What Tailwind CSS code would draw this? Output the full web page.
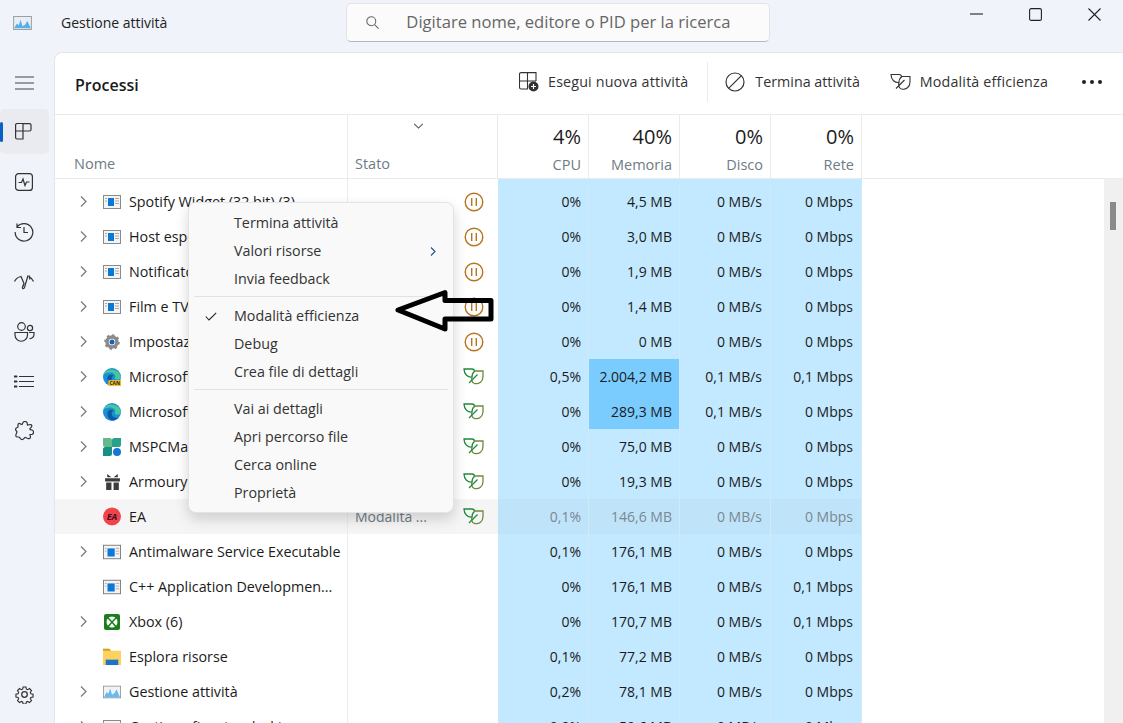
<!DOCTYPE html>
<html lang="it">
<head>
  <meta charset="UTF-8" />
  <title>Gestione attività</title>
  <script src="https://cdn.jsdelivr.net/npm/@tailwindcss/browser@4"></script>
</head>
<body class="relative h-[723px] w-[1123px] overflow-hidden bg-[#f0f3f9] text-[14px] text-[#1b1b1b] font-['Open_Sans',sans-serif]">

  <!-- Title bar -->
  <header class="flex h-[52px] items-center pb-[7px]">
    <svg class="ml-[13px] h-[14px] w-[19px]" viewBox="0 0 20 15"><rect x=".5" y=".5" width="19" height="14" fill="#e8eef5" stroke="#9a9a9a"/><path d="M1 13 L4 8 L6 10 L8 4 L10 11 L13 9 L15 5 L19 13 Z" fill="#5aaeea"/></svg>
    <span class="ml-[29px] text-[#222]">Gestione attività</span>
    <div class="ml-[179px] flex h-[39px] w-[424px] items-center rounded-[5px] border border-[#e3e4e6] border-b-[#b5b5b5] bg-[#fbfbfb]">
      <svg class="ml-[19px] h-[13px] w-[13px]" viewBox="0 0 16 16" fill="none" stroke="#666" stroke-width="1.300"><circle cx="6.500" cy="6.500" r="5.500"/><path d="M10.500 10.500 L15.500 15.500"/></svg>
      <span class="ml-[27px] text-[16.600px] text-[#666]">Digitare nome, editore o PID per la ricerca</span>
    </div>
    <div class="ml-auto mt-[-17px] flex items-center">
      <svg class="h-[12px] w-[13px]" viewBox="0 0 13 12" stroke="#222" stroke-width="1.100"><path d="M0 6 H13"/></svg>
      <svg class="ml-[46px] h-[13px] w-[13px]" viewBox="0 0 13 13" fill="none" stroke="#222" stroke-width="1.100"><rect x=".6" y=".6" width="11.800" height="11.800" rx="1.500"/></svg>
      <svg class="ml-[46px] mr-[22px] h-[13px] w-[13px]" viewBox="0 0 13 13" fill="none" stroke="#222" stroke-width="1.100"><path d="M.5 .5 L12.500 12.500 M12.500 .5 L.5 12.500"/></svg>
    </div>
  </header>

  <div class="flex h-[671px]">
    <!-- Left navigation -->
    <nav class="relative flex w-[54px] shrink-0 flex-col">
      <div class="flex h-[54px] items-center pl-[15px] pt-[8px]">
        <svg class="h-[16px] w-[19px]" viewBox="0 0 19 16" stroke="#444" stroke-width="1.200"><path d="M0 2 H19 M0 8 H19 M0 14 H19"/></svg>
      </div>
      <div class="flex h-[50px] items-center">
        <div class="relative flex h-[45px] w-[49px] items-center rounded-[5px] bg-[#e9ebf0]">
          <span class="absolute left-0 top-[13px] h-[20px] w-[3px] rounded-full bg-[#0a5fc2]"></span>
          <svg class="ml-[15px] h-[17px] w-[17px]" viewBox="0 0 17 17" fill="none" stroke="#333" stroke-width="1.200"><path d="M.6 2 a1.500 1.500 0 0 1 1.500 -1.500 H8 V8 H.6 Z M8 .6 H14.500 a1.500 1.500 0 0 1 1.500 1.500 V6.500 a1.500 1.500 0 0 1 -1.500 1.500 H8 M.6 8 V14.500 a1.500 1.500 0 0 0 1.500 1.500 H8 V8"/></svg>
        </div>
      </div>
      <div class="flex h-[50px] items-center pl-[15px] pt-[2px]">
        <svg class="h-[18px] w-[18px]" viewBox="0 0 18 18" fill="none" stroke="#333" stroke-width="1.200"><rect x=".6" y=".6" width="16.800" height="16.800" rx="3"/><path d="M3.500 9.500 H6.500 L8 6 L10 12.500 L11.500 9 H14.500"/></svg>
      </div>
      <div class="flex h-[50px] items-center pl-[14px] pt-[2px]">
        <svg class="h-[20px] w-[20px]" viewBox="0 0 20 20" fill="none" stroke="#333" stroke-width="1.200"><path d="M3 5 A8.800 8.800 0 1 1 1.200 10 M3 1.500 V5.500 H7 M10 5 V10.500 H14"/></svg>
      </div>
      <div class="flex h-[50px] items-center pl-[14px] pt-[2px]">
        <svg class="h-[16px] w-[20px]" viewBox="0 0 20 15" fill="none" stroke="#333" stroke-width="1.200"><path d="M.5 7 C2 4 4.500 2.500 7 2 L10 9 L9 12 M14 1 L10.500 13 C10 14.500 8 14.500 8.500 12.500 L10 9 M15 2 C17 3 18.500 5 19.500 7 M15 1 L16 5"/></svg>
      </div>
      <div class="flex h-[50px] items-center pl-[14px] pt-[2px]">
        <svg class="h-[20px] w-[21px]" viewBox="0 0 21 20" fill="none" stroke="#333" stroke-width="1.200"><circle cx="7.500" cy="4.500" r="3.800"/><circle cx="16" cy="6" r="2.600"/><path d="M1 10.500 H13.500 V13 A6 6 0 0 1 1 13 Z M15 10.500 H20 V12.500 A4 4 0 0 1 15.500 16.500"/></svg>
      </div>
      <div class="flex h-[49px] items-center pl-[14px] pt-[2px]">
        <svg class="h-[13px] w-[20px]" viewBox="0 0 20 13" fill="none" stroke="#333" stroke-width="1.200"><path d="M5 1.500 H20 M5 6.500 H20 M5 11.500 H20"/><path d="M.5 1.500 H2.500 M.5 6.500 H2.500 M.5 11.500 H2.500" stroke-width="2" stroke-linecap="round"/></svg>
      </div>
      <div class="flex h-[50px] items-center pl-[15px] pt-[2px]">
        <svg class="h-[20px] w-[19px]" viewBox="0 0 19 20" fill="none" stroke="#333" stroke-width="1.200"><path d="M8 1.500 C9 0 11 0 12 1.500 L12.500 4 L15.500 3.500 C17 3.500 17 5 16.500 6 L15 7.500 C14.500 8.500 16 9 17 9 C19 9.500 19 13 17 13.500 L15 13.500 L15.500 16 C15.500 17.500 14 18 13 17.500 L10.500 16.500 C9.500 16 8.500 19 7 18.500 C5.500 18.500 5 16.500 4 16 L2 16 C1 16 .5 14.500 1 13.500 L2 11 C2 10 .5 9.500 .5 8.500 C.5 7 2 6.500 3 6 L3 3.500 C3 2.500 4.500 2 5.500 3 L7 3.500 Z"/></svg>
      </div>
      <svg class="absolute bottom-[19px] left-[15px] h-[19px] w-[19px]" viewBox="0 0 24 24" fill="none" stroke="#333" stroke-width="1.600"><circle cx="12" cy="12" r="3.500"/><path d="M10 1.500 h4 l.6 3 1.800 .8 2.600 -1.600 2.800 2.800 -1.600 2.600 .8 1.800 3 .6 v4 l-3 .6 -.8 1.800 1.600 2.600 -2.800 2.800 -2.600 -1.600 -1.800 .8 -.6 3 h-4 l-.6 -3 -1.800 -.8 -2.600 1.600 -2.800 -2.800 1.600 -2.600 -.8 -1.800 -3 -.6 v-4 l3 -.6 .8 -1.800 -1.600 -2.600 2.800 -2.800 2.600 1.600 1.800 -.8 z" transform="translate(1.200 1.200) scale(.9)"/></svg>
    </nav>

    <!-- Main panel -->
    <main class="relative min-w-0 flex-1 overflow-hidden rounded-tl-[8px] border-l border-t border-[#e5e5e5] bg-white">
      <!-- Command bar -->
      <div class="flex h-[62px] items-center border-b border-[#ebebeb] pb-[4px]">
        <h1 class="ml-[20px] mt-[6px] text-[16px] font-semibold text-[#1a1a1a]">Processi</h1>
        <svg class="ml-auto h-[20px] w-[20px]" viewBox="0 0 20 20" fill="none" stroke="#333" stroke-width="1.100"><path d="M9 17 H2 a1.500 1.500 0 0 1 -1.500 -1.500 V2 A1.500 1.500 0 0 1 2 .6 H17 V9 M.6 9 H17 M8.500 .6 V17"/><circle cx="14.500" cy="14.500" r="5" fill="#333" stroke="none"/><path d="M14.500 12 V17 M12 14.500 H17" stroke="#fff"/></svg>
        <span class="ml-[9px] text-[14.300px] tracking-[0.15px] text-[#333]">Esegui nuova attività</span>
        <span class="ml-[19px] h-[40px] w-px bg-[#ebebeb]"></span>
        <svg class="ml-[17px] h-[20px] w-[20px]" viewBox="0 0 20 20" fill="none" stroke="#333" stroke-width="1.200"><circle cx="10" cy="10" r="9"/><path d="M3.600 16.400 L16.400 3.600"/></svg>
        <span class="ml-[10px] text-[14.300px] text-[#333]">Termina attività</span>
        <svg class="ml-[30px] h-[18px] w-[21px]" viewBox="0 0 21 18" fill="none" stroke="#333" stroke-width="1.100"><path d="M1 1.500 H9 C11 1.500 11.500 3 11.500 4 C10 5 9 7 9 9.500 C5 10 1 7 1 1.500 Z M11 3.500 H20 V9 C20 14 16 17 11.500 16 C8 15 8.500 11 9 9.500 M6 15.500 L14.500 7"/></svg>
        <span class="ml-[9px] text-[14.300px] tracking-[0.15px] text-[#333]">Modalità efficienza</span>
        <span class="ml-[34px] mr-[21px] flex gap-[4px]">
          <i class="h-[4px] w-[4px] rounded-full bg-[#222]"></i><i class="h-[4px] w-[4px] rounded-full bg-[#222]"></i><i class="h-[4px] w-[4px] rounded-full bg-[#222]"></i>
        </span>
      </div>

      <!-- Column heads -->
      <div class="grid h-[64px] grid-cols-[293px_150px_91px_91px_91px_91px_1fr] border-b border-[#ebebeb]">
        <div class="flex items-end border-r border-[#ebebeb] pb-[3px] pl-[19px] text-[14.500px] text-[#6f7b85]">Nome</div>
        <div class="relative flex items-end border-r border-[#ebebeb] pb-[3px] pl-[7px] text-[14.500px] text-[#6f7b85]">Stato
          <svg class="absolute left-[65px] top-[8px] h-[6px] w-[11px]" viewBox="0 0 12 7" fill="none" stroke="#555" stroke-width="1.200"><path d="M1 1 L6 6 L11 1"/></svg>
        </div>
        <div class="flex flex-col items-end border-r border-[#ebebeb] pr-[7px] pt-[8px]"><span class="text-[20px] leading-[28px]">4%</span><span class="mt-[3px] text-[14.500px] text-[#6f7b85]">CPU</span></div>
        <div class="flex flex-col items-end border-r border-[#ebebeb] pr-[7px] pt-[8px]"><span class="text-[20px] leading-[28px]">40%</span><span class="mt-[3px] text-[14.500px] text-[#6f7b85]">Memoria</span></div>
        <div class="flex flex-col items-end border-r border-[#ebebeb] pr-[7px] pt-[8px]"><span class="text-[20px] leading-[28px]">0%</span><span class="mt-[3px] text-[14.500px] text-[#6f7b85]">Disco</span></div>
        <div class="flex flex-col items-end border-r border-[#ebebeb] pr-[7px] pt-[8px]"><span class="text-[20px] leading-[28px]">0%</span><span class="mt-[3px] text-[14.500px] text-[#6f7b85]">Rete</span></div>
        <div></div>
      </div>

      <!-- Process rows -->
      <div class="relative h-[545px] overflow-hidden">
        <div class="absolute left-[443px] top-0 h-full w-[364px] bg-[#c2e9ff]"></div>
        <div id="rows" class="relative pt-[5px]"></div>
        <div class="pointer-events-none absolute left-[292px] top-0 h-full w-px bg-[#ebebeb]"></div>
        <div class="absolute right-0 top-0 h-full w-[19px] bg-[#f0f0f0]">
          <div class="ml-[6px] mt-[23px] h-[28px] w-[6px] bg-[#8a8a8a]"></div>
        </div>
      </div>
    </main>
  </div>

  <!-- Context menu -->
  <div class="absolute left-[188px] top-[202px] w-[266px] rounded-[8px] border border-[#e4e4e4] bg-[#f9f9f9] px-[4px] pb-[5px] pt-[6px] text-[14.300px] text-[#333] shadow-[0_6px_14px_rgba(0,0,0,0.16)]">
    <div class="flex h-[28px] items-center pl-[41px]">Termina attività</div>
    <div class="flex h-[28px] items-center justify-between pl-[41px] pr-[13px]">Valori risorse
      <svg class="h-[9px] w-[6px]" viewBox="0 0 6 9" fill="none" stroke="#1f4f8f" stroke-width="1.100"><path d="M1 .5 L5 4.500 L1 8.500"/></svg>
    </div>
    <div class="flex h-[28px] items-center pl-[41px]">Invia feedback</div>
    <div class="mx-[1px] mb-[5px] mt-[3px] h-px bg-[#e2e2e2]"></div>
    <div class="flex h-[28px] items-center pl-[12px]">
      <svg class="mr-[17px] h-[9px] w-[12px]" viewBox="0 0 12 9" fill="none" stroke="#222" stroke-width="1.100"><path d="M.8 4.500 L4 8 L11.200 .8"/></svg>Modalità efficienza
    </div>
    <div class="flex h-[28px] items-center pl-[41px]">Debug</div>
    <div class="flex h-[28px] items-center pl-[41px]">Crea file di dettagli</div>
    <div class="mx-[1px] mb-[5px] mt-[3px] h-px bg-[#e2e2e2]"></div>
    <div class="flex h-[28px] items-center pl-[41px]">Vai ai dettagli</div>
    <div class="flex h-[28px] items-center pl-[41px]">Apri percorso file</div>
    <div class="flex h-[28px] items-center pl-[41px]">Cerca online</div>
    <div class="flex h-[28px] items-center pl-[41px]">Proprietà</div>
  </div>

  <!-- Arrow drawn over the screenshot -->
  <svg class="pointer-events-none absolute left-[390px] top-[285px] h-[50px] w-[110px]" viewBox="0 0 110 50" fill="none" stroke="#000" stroke-width="5" stroke-linejoin="round"><path d="M8 25 L55 7.500 V15.500 H101 V34 H55 V44 Z"/></svg>

  <script>
    const edge = '<svg class="h-[20px] w-[20px]" viewBox="0 0 20 20"><circle cx="10" cy="10" r="10" fill="#1a8fd6"/><path d="M1 7 C3 0 17 -1 20 10 C20 13 15 14 13 12 C15 8 12 5 8 5 C5 5 2 6 1 7 Z" fill="#48c89a"/><path d="M5 13 C4 7 10 6 12 9 C10 9 9 11 10 14 C12 17 16 17 17 16 C13 21 6 20 5 13 Z" fill="#0c59a4"/></svg>';
    const icons = {
      win: '<svg class="h-[14px] w-[18px]" viewBox="0 0 18 14"><rect x=".5" y=".5" width="17" height="13" fill="#f4f4f4" stroke="#8a8a8a"/><rect x="5" y="3" width="6" height="8" fill="#0a78d7"/><path d="M12 3.500 H16 M12 6 H16 M12 8.500 H16 M2 3.500 H4 M2 6 H4" stroke="#aaa"/></svg>',
      wind: '<svg class="h-[16px] w-[20px]" viewBox="0 0 20 16"><rect x=".5" y=".5" width="19" height="15" fill="#f4f4f4" stroke="#777"/><rect x="5" y="4" width="8" height="9" fill="#0a78d7"/><path d="M14 4 H18 M14 7 H18 M14 10 H18 M2 4 H4 M2 7 H4" stroke="#aaa"/></svg>',
      gear: '<svg class="h-[16px] w-[16px]" viewBox="0 0 16 16"><circle cx="8" cy="8" r="5" fill="none" stroke="#8a8a8a" stroke-width="3.500"/><circle cx="8" cy="8" r="6.800" fill="none" stroke="#8a8a8a" stroke-width="2" stroke-dasharray="2.500 2.800"/><circle cx="8" cy="8" r="2.500" fill="#1d5fb8"/></svg>',
      can: edge.replace('</svg>', '<rect x="6" y="13.500" width="14" height="6.500" fill="#f7c02b"/><text x="13" y="19" font-size="5.500" font-weight="700" text-anchor="middle" fill="#222">CAN</text></svg>'),
      edge,
      msp: '<svg class="h-[18px] w-[18px]" viewBox="0 0 18 18"><path d="M0 0 H7 C8 0 9 1 9 2 V9 H2 C1 9 0 8 0 7 Z" fill="#62b98a"/><path d="M18 0 H11 C10 0 9 1 9 2 V9 H16 C17 9 18 8 18 7 Z" fill="#2a9f8c"/><path d="M0 18 H7 C8 18 9 17 9 16 V9 H2 C1 9 0 10 0 11 Z" fill="#188f86"/><circle cx="14" cy="14" r="4" fill="#1677d2"/></svg>',
      gift: '<svg class="h-[18px] w-[17px]" viewBox="0 0 16 17"><path d="M1 5 H15 V8 H1 Z M2 9 H7 V16 H2 Z M9 9 H14 V16 H9 Z M3 1 L7 4 H3 Z M13 1 L9 4 H13 Z" fill="#3c3c3c"/></svg>',
      ea: '<svg class="h-[19px] w-[19px]" viewBox="0 0 18 18"><circle cx="9" cy="9" r="9" fill="#f2424b"/><text x="9" y="12" font-size="9" font-weight="700" font-style="italic" text-anchor="middle" fill="#3a1020">EA</text></svg>',
      xbox: '<svg class="h-[16px] w-[16px]" viewBox="0 0 16 16"><rect width="16" height="16" rx="2" fill="#1a7f1a"/><circle cx="8" cy="8" r="5.500" fill="#fff"/><path d="M8 8 L3 3 M8 8 L13 3 M8 8 L3.500 13.500 M8 8 L12.500 13.500" stroke="#1a7f1a" stroke-width="1.500"/></svg>',
      folder: '<svg class="h-[19px] w-[20px]" viewBox="0 0 20 19"><path d="M0 1 H7 L9 3 H20 V19 H0 Z" fill="#fbd25f"/><path d="M0 1 H7 L9 3 H0 Z" fill="#d99c26"/><rect x="3" y="13" width="14" height="6" fill="#1b75c6"/></svg>',
      chart: '<svg class="h-[14px] w-[20px]" viewBox="0 0 20 14"><rect x=".5" y=".5" width="19" height="13" fill="#eef3f8" stroke="#999"/><path d="M1 13 L4 7 L6 9 L8 3 L10 10 L13 8 L15 4 L19 13 Z" fill="#6cb8ee"/></svg>',
    };
    const pause = '<svg class="h-[20px] w-[20px]" viewBox="0 0 20 20" fill="none" stroke="#b8731b" stroke-width="1.400"><circle cx="10" cy="10" r="8.800"/><path d="M7.700 6 V14 M12.300 6 V14"/></svg>';
    const leaf = '<svg class="h-[19px] w-[21px]" viewBox="0 0 21 18" fill="none" stroke-width="1.300"><path d="M1 1.500 H9 C11 1.500 11.500 3 11.500 4 C10 5 9 7 9 9.500 C5 10 1 7 1 1.500 Z" stroke="#1e8a3a"/><path d="M11 3.500 H20 V9 C20 14 16 17 11.500 16 C8 15 8.500 11 9 9.500" stroke="#6f8a3a"/><path d="M6 15.500 L14.500 7" stroke="#1e8a3a"/></svg>';

    // name, icon, expandable, status, cpu, mem, disk, net
    const data = [
      ['Spotify Widget (32 bit) (3)', 'win', 1, pause, '0%', '4,5 MB', '0 MB/s', '0 Mbps'],
      ['Host esperienza Windows', 'win', 1, pause, '0%', '3,0 MB', '0 MB/s', '0 Mbps'],
      ['Notificatore', 'win', 1, pause, '0%', '1,9 MB', '0 MB/s', '0 Mbps'],
      ['Film e TV (2)', 'win', 1, pause, '0%', '1,4 MB', '0 MB/s', '0 Mbps'],
      ['Impostazioni', 'gear', 1, pause, '0%', '0 MB', '0 MB/s', '0 Mbps'],
      ['Microsoft Edge Canary', 'can', 1, leaf, '0,5%', '2.004,2 MB', '0,1 MB/s', '0,1 Mbps'],
      ['Microsoft Edge', 'edge', 1, leaf, '0%', '289,3 MB', '0,1 MB/s', '0 Mbps'],
      ['MSPCManager', 'msp', 1, leaf, '0%', '75,0 MB', '0 MB/s', '0 Mbps'],
      ['ArmouryCrate', 'gift', 1, leaf, '0%', '19,3 MB', '0 MB/s', '0 Mbps'],
      ['EA', 'ea', 0, leaf, '0,1%', '146,6 MB', '0 MB/s', '0 Mbps'],
      ['Antimalware Service Executable', 'wind', 1, '', '0,1%', '176,1 MB', '0 MB/s', '0 Mbps'],
      ['C++ Application Developmen...', 'wind', 0, '', '0%', '176,1 MB', '0 MB/s', '0,1 Mbps'],
      ['Xbox (6)', 'xbox', 1, '', '0%', '170,7 MB', '0 MB/s', '0,1 Mbps'],
      ['Esplora risorse', 'folder', 0, '', '0,1%', '77,2 MB', '0 MB/s', '0 Mbps'],
      ['Gestione attività', 'chart', 1, '', '0,2%', '78,1 MB', '0 MB/s', '0 Mbps'],
      ['Gestione finestre desktop', 'win', 1, '', '0,9%', '59,6 MB', '0 MB/s', '0 Mbps'],
    ];

    const chevron = '<svg class="ml-[25px] h-[11px] w-[7px]" viewBox="0 0 7 11" fill="none" stroke="#777" stroke-width="1.200"><path d="M1 .5 L6 5.500 L1 10.500"/></svg>';

    document.getElementById('rows').innerHTML = data.map((r, i) => {
      const ea = r[0] === 'EA';
      const hot = i === 5 || i === 6;
      const tone = ea ? 'bg-[#bfe4fa] text-[#7b8791]' : 'text-[#1b1b1b]';
      const cell = 'flex items-center justify-end border-r border-[#d2eaf6] ';
      const hover = ea ? 'bg-[#f5f5f5]' : '';
      return `<div class="grid h-[35px] grid-cols-[293px_150px_91px_91px_91px_91px_1fr]">
        <div class="flex items-center overflow-hidden whitespace-nowrap text-[14.300px] ${hover}">
          <span class="flex w-[48px] shrink-0 items-center">${r[2] ? chevron : ''}</span>
          <span class="flex w-[26px] shrink-0 justify-center pr-[8px]">${icons[r[1]]}</span>${r[0]}
        </div>
        <div class="flex items-center justify-between pl-[7px] pr-[14px] text-[#6f7b85] ${hover}"><span>${ea ? 'Modalità ...' : ''}</span>${r[3]}</div>
        <div class="${cell}pr-[7px] ${tone}">${r[4]}</div>
        <div class="${cell}pr-[7px] ${tone} ${hot ? 'bg-[#7accff]' : ''}">${r[5]}</div>
        <div class="${cell}pr-[8px] ${tone}">${r[6]}</div>
        <div class="${cell}pr-[8px] ${tone}">${r[7]}</div>
        <div></div>
      </div>`;
    }).join('');
  </script>
</body>
</html>
